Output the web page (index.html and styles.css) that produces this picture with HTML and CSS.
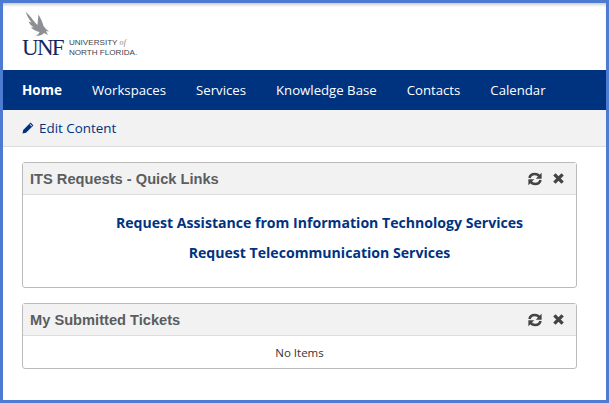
FILE: index.html
```html
<!DOCTYPE html>
<html lang="en">
<head>
<meta charset="utf-8">
<title>UNF ITS</title>
<link rel="stylesheet" href="styles.css">
</head>
<body>
<div class="frame">
  <header class="brand">
    <div class="logo">
      <svg class="bird" viewBox="0 0 26 26" width="26" height="26" aria-hidden="true">
        <path fill="#8d8f94" d="M0.5 0.5 C3 3 6 6 8 9 C9.5 11 11 12.5 12.5 14 C12.8 10.5 13 7 13.5 3.5 C15.5 7 17.5 11 18.5 15 C20 17 22 19 24 20.5 L21 20 L23 24 L19 22 C17 24.5 14 25 11 24.5 C13 23.5 14 22.5 14.5 21 C11 20 8 19 6 16.5 C7 16.3 8 16.3 9 16.5 C6.5 15 4.5 13 3.5 10.5 C4.5 11 5.5 11.3 6.5 11.5 C4 8.5 2 4.5 0.5 0.5 Z"/>
      </svg>
      <div class="wordmark">
        <span class="unf">UNF</span>
        <span class="uni"><span>UNIVERSITY <i>of</i></span><span>NORTH FLORIDA.</span></span>
      </div>
    </div>
  </header>
  <nav class="nav">
    <a class="nav-item active">Home</a>
    <a class="nav-item">Workspaces</a>
    <a class="nav-item">Services</a>
    <a class="nav-item">Knowledge Base</a>
    <a class="nav-item">Contacts</a>
    <a class="nav-item">Calendar</a>
  </nav>
  <div class="subbar">
    <svg class="pencil" viewBox="0 0 12 12" width="12" height="12" aria-hidden="true">
      <path fill="#00337f" d="M8.6 0.6 L11.4 3.4 L4 10.8 L0.5 11.5 L1.2 8 Z"/>
      <path fill="#f2f2f2" d="M7.6 2.5 L8.2 1.9 L10.1 3.8 L9.5 4.4 Z"/>
    </svg>
    <a class="edit">Edit Content</a>
  </div>
  <main class="content">
    <section class="panel">
      <div class="panel-head">
        <h2>ITS Requests - Quick Links</h2>
        <div class="tools">
          <svg viewBox="0 0 14 14" width="14" height="14" aria-hidden="true"><path fill="none" stroke="#444" stroke-width="2.6" d="M1.5 6 C2 3.5 4.2 2 6.8 2 C9 2 10.6 3 11.6 4.6"/><path fill="#444" d="M13.6 0.8 V6.8 H7.8 Z"/><path fill="none" stroke="#444" stroke-width="2.6" d="M12.5 8 C12 10.5 9.8 12 7.2 12 C5 12 3.4 11 2.4 9.4"/><path fill="#444" d="M0.4 13.2 V7.2 H6.2 Z"/></svg>
          <svg viewBox="0 0 12 12" width="11" height="11" aria-hidden="true"><path stroke="#444" stroke-width="3.6" d="M1.5 1.5 L10.5 10.5 M10.5 1.5 L1.5 10.5"/></svg>
        </div>
      </div>
      <div class="links">
        <a>Request Assistance from Information Technology Services</a>
        <a>Request Telecommunication Services</a>
      </div>
    </section>
    <section class="panel">
      <div class="panel-head">
        <h2>My Submitted Tickets</h2>
        <div class="tools">
          <svg viewBox="0 0 14 14" width="14" height="14" aria-hidden="true"><path fill="none" stroke="#444" stroke-width="2.6" d="M1.5 6 C2 3.5 4.2 2 6.8 2 C9 2 10.6 3 11.6 4.6"/><path fill="#444" d="M13.6 0.8 V6.8 H7.8 Z"/><path fill="none" stroke="#444" stroke-width="2.6" d="M12.5 8 C12 10.5 9.8 12 7.2 12 C5 12 3.4 11 2.4 9.4"/><path fill="#444" d="M0.4 13.2 V7.2 H6.2 Z"/></svg>
          <svg viewBox="0 0 12 12" width="11" height="11" aria-hidden="true"><path stroke="#444" stroke-width="3.6" d="M1.5 1.5 L10.5 10.5 M10.5 1.5 L1.5 10.5"/></svg>
        </div>
      </div>
      <p class="empty">No Items</p>
    </section>
  </main>
</div>
</body>
</html>
```
FILE: styles.css
```css
* { box-sizing: border-box; }
html, body { margin: 0; padding: 0; }
body { width: 609px; height: 403px; overflow: hidden; background: #fff; font-family: "Open Sans", sans-serif; }
.frame {
  width: 609px;
  height: 403px;
  border: 3px solid #4c7bd1;
  background: #fff;
  overflow: hidden;
}
.brand { height: 67px; padding: 8px 0 0 19px; background: #fff; box-shadow: inset 0 3px 3px -1px #ccc; }
.logo { display: flex; flex-direction: column; }
.bird { display: block; margin-left: 3px; width: 26px; height: 26px; }
.wordmark { display: flex; align-items: center; gap: 6px; margin-top: 1px; }
.unf { font-family: "Liberation Serif", serif; font-size: 23px; line-height: 18px; color: #14275c; letter-spacing: -1.7px; }
.uni { display: flex; flex-direction: column; font-family: "Liberation Sans", sans-serif; font-size: 8.1px; line-height: 9.5px; color: #3d4450; }
.uni i { font-family: "Liberation Serif", serif; color: #888; }
.nav { height: 40px; background: #00337f; display: flex; align-items: center; padding-left: 19px; gap: 30px; }
.nav-item { color: #fff; font-size: 13.2px; line-height: 40px; }
.nav-item.active { font-weight: 700; font-size: 13.5px; }
.subbar { height: 37px; background: #f2f2f2; border-bottom: 1px solid #ddd; display: flex; align-items: center; padding: 0 0 1px 19px; gap: 5px; }
.edit { color: #00337f; font-size: 13.4px; }
.content { display: flex; flex-direction: column; gap: 15px; padding: 15px 29px 0 19px; }
.panel { border: 1px solid #bbb; border-radius: 3px; background: #fff; }
.panel-head { height: 32px; background: #f2f2f2; border-bottom: 1px solid #ddd; display: flex; align-items: center; justify-content: space-between; padding: 0 12px 0 7px; }
.panel-head h2 { margin: 0; font-family: "Liberation Sans", sans-serif; font-weight: 700; font-size: 14.65px; color: #5c5d5f; }
.tools { display: flex; align-items: center; gap: 11px; }
.tools svg { display: block; }
.links { height: 92px; display: flex; flex-direction: column; align-items: center; padding: 18px 0 0 40px; gap: 11px; }
.links a { color: #00337f; font-weight: 700; font-size: 14.1px; line-height: 19px; }
.empty { margin: 0; height: 32px; display: flex; align-items: center; justify-content: center; font-size: 11.5px; color: #333; }
```
